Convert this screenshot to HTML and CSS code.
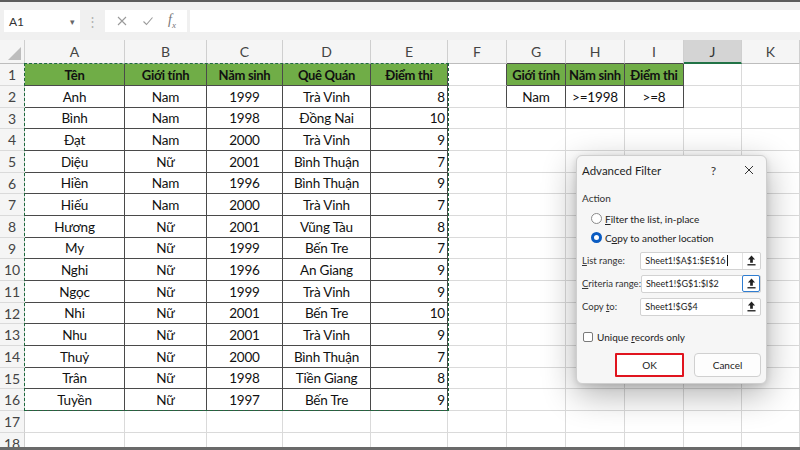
FILE: index.html
```html
<!DOCTYPE html>
<html lang="vi">
<head>
<meta charset="utf-8">
<title>Advanced Filter</title>
<link rel="stylesheet" href="styles.css">
</head>
<body>
<div class="frame">
  <div class="toolbar">
    <div class="namebox"><span>A1</span><span class="caret">&#9662;</span></div>
    <div class="grip">&#8942;</div>
    <div class="fbtns">
      <svg class="ico" viewBox="0 0 12 12" width="12" height="12"><path d="M2 2 L10 10 M10 2 L2 10" stroke="#9a9a9a" stroke-width="1.1" fill="none"/></svg>
      <svg class="ico" viewBox="0 0 12 12" width="12" height="12"><path d="M1.5 6.5 L4.5 9.5 L10.5 2.5" stroke="#9a9a9a" stroke-width="1.1" fill="none"/></svg>
      <span class="fx">f<sub>x</sub></span>
    </div>
    <div class="finput"></div>
  </div>

  <div class="sheet">
    <div class="grid">
      <div class="c corner"><span class="tri"></span></div>
      <div class="c ch">A</div><div class="c ch">B</div><div class="c ch">C</div><div class="c ch">D</div><div class="c ch">E</div><div class="c ch">F</div><div class="c ch ku">G</div><div class="c ch ku">H</div><div class="c ch ku">I</div><div class="c ch sel">J</div><div class="c ch">K</div>

      <div class="c rh">1</div><div class="c k g">Tên</div><div class="c k g">Giới tính</div><div class="c k g">Năm sinh</div><div class="c k g">Quê Quán</div><div class="c k g">Điểm thi</div><div class="c kl"></div><div class="c k g">Giới tính</div><div class="c k g">Năm sinh</div><div class="c k g">Điểm thi</div><div class="c"></div><div class="c"></div>

      <div class="c rh">2</div><div class="c k">Anh</div><div class="c k">Nam</div><div class="c k">1999</div><div class="c k">Trà Vinh</div><div class="c k n">8</div><div class="c kl"></div><div class="c k">Nam</div><div class="c k">&gt;=1998</div><div class="c k">&gt;=8</div><div class="c"></div><div class="c"></div>

      <div class="c rh">3</div><div class="c k">Bình</div><div class="c k">Nam</div><div class="c k">1998</div><div class="c k">Đồng Nai</div><div class="c k n">10</div><div class="c"></div><div class="c"></div><div class="c"></div><div class="c"></div><div class="c"></div><div class="c"></div>

      <div class="c rh">4</div><div class="c k">Đạt</div><div class="c k">Nam</div><div class="c k">2000</div><div class="c k">Trà Vinh</div><div class="c k n">9</div><div class="c"></div><div class="c"></div><div class="c"></div><div class="c"></div><div class="c"></div><div class="c"></div>

      <div class="c rh">5</div><div class="c k">Diệu</div><div class="c k">Nữ</div><div class="c k">2001</div><div class="c k">Bình Thuận</div><div class="c k n">7</div><div class="c"></div><div class="c"></div><div class="c"></div><div class="c"></div><div class="c"></div><div class="c"></div>

      <div class="c rh">6</div><div class="c k">Hiền</div><div class="c k">Nam</div><div class="c k">1996</div><div class="c k">Bình Thuận</div><div class="c k n">9</div><div class="c"></div><div class="c"></div><div class="c"></div><div class="c"></div><div class="c"></div><div class="c"></div>

      <div class="c rh">7</div><div class="c k">Hiếu</div><div class="c k">Nam</div><div class="c k">2000</div><div class="c k">Trà Vinh</div><div class="c k n">7</div><div class="c"></div><div class="c"></div><div class="c"></div><div class="c"></div><div class="c"></div><div class="c"></div>

      <div class="c rh">8</div><div class="c k">Hương</div><div class="c k">Nữ</div><div class="c k">2001</div><div class="c k">Vũng Tàu</div><div class="c k n">8</div><div class="c"></div><div class="c"></div><div class="c"></div><div class="c"></div><div class="c"></div><div class="c"></div>

      <div class="c rh">9</div><div class="c k">My</div><div class="c k">Nữ</div><div class="c k">1999</div><div class="c k">Bến Tre</div><div class="c k n">7</div><div class="c"></div><div class="c"></div><div class="c"></div><div class="c"></div><div class="c"></div><div class="c"></div>

      <div class="c rh">10</div><div class="c k">Nghi</div><div class="c k">Nữ</div><div class="c k">1996</div><div class="c k">An Giang</div><div class="c k n">9</div><div class="c"></div><div class="c"></div><div class="c"></div><div class="c"></div><div class="c"></div><div class="c"></div>

      <div class="c rh">11</div><div class="c k">Ngọc</div><div class="c k">Nữ</div><div class="c k">1999</div><div class="c k">Trà Vinh</div><div class="c k n">9</div><div class="c"></div><div class="c"></div><div class="c"></div><div class="c"></div><div class="c"></div><div class="c"></div>

      <div class="c rh">12</div><div class="c k">Nhi</div><div class="c k">Nữ</div><div class="c k">2001</div><div class="c k">Bến Tre</div><div class="c k n">10</div><div class="c"></div><div class="c"></div><div class="c"></div><div class="c"></div><div class="c"></div><div class="c"></div>

      <div class="c rh">13</div><div class="c k">Nhu</div><div class="c k">Nữ</div><div class="c k">2001</div><div class="c k">Trà Vinh</div><div class="c k n">9</div><div class="c"></div><div class="c"></div><div class="c"></div><div class="c"></div><div class="c"></div><div class="c"></div>

      <div class="c rh">14</div><div class="c k">Thuỷ</div><div class="c k">Nữ</div><div class="c k">2000</div><div class="c k">Bình Thuận</div><div class="c k n">7</div><div class="c"></div><div class="c"></div><div class="c"></div><div class="c"></div><div class="c"></div><div class="c"></div>

      <div class="c rh">15</div><div class="c k">Trân</div><div class="c k">Nữ</div><div class="c k">1998</div><div class="c k">Tiền Giang</div><div class="c k n">8</div><div class="c"></div><div class="c"></div><div class="c"></div><div class="c"></div><div class="c"></div><div class="c"></div>

      <div class="c rh">16</div><div class="c k">Tuyền</div><div class="c k">Nữ</div><div class="c k">1997</div><div class="c k">Bến Tre</div><div class="c k n">9</div><div class="c"></div><div class="c"></div><div class="c"></div><div class="c"></div><div class="c"></div><div class="c"></div>

      <div class="c rh">17</div><div class="c"></div><div class="c"></div><div class="c"></div><div class="c"></div><div class="c"></div><div class="c"></div><div class="c"></div><div class="c"></div><div class="c"></div><div class="c"></div><div class="c"></div>

      <div class="c rh">18</div><div class="c"></div><div class="c"></div><div class="c"></div><div class="c"></div><div class="c"></div><div class="c"></div><div class="c"></div><div class="c"></div><div class="c"></div><div class="c"></div><div class="c"></div>
    </div>
    <div class="marquee"></div>
  </div>

  <div class="dlg">
    <div class="dlg-title">
      <span class="t">Advanced Filter</span>
      <span class="q">?</span>
      <svg class="close" viewBox="0 0 10 10" width="10" height="10"><path d="M1 1 L9 9 M9 1 L1 9" stroke="#333" stroke-width="1" fill="none"/></svg>
    </div>
    <div class="sect">Action</div>
    <div class="radio"><span class="rb"></span><span><u>F</u>ilter the list, in-place</span></div>
    <div class="radio"><span class="rb on"></span><span>C<u>o</u>py to another location</span></div>
    <div class="fields">
      <div class="field"><span class="lbl"><u>L</u>ist range:</span>
        <div class="inp"><span class="val">Sheet1!$A$1:$E$16<span class="cursor"></span></span>
          <span class="pick"><svg viewBox="0 0 10 12" width="9" height="11"><path d="M5 0.5 L1 5 H3.5 V8.5 H6.5 V5 H9 Z" fill="#222"/><rect x="0.5" y="10" width="9" height="1.5" fill="#222"/></svg></span></div>
      </div>
      <div class="field"><span class="lbl"><u>C</u>riteria range:</span>
        <div class="inp"><span class="val">Sheet1!$G$1:$I$2</span>
          <span class="pick focus"><svg viewBox="0 0 10 12" width="9" height="11"><path d="M5 0.5 L1 5 H3.5 V8.5 H6.5 V5 H9 Z" fill="#222"/><rect x="0.5" y="10" width="9" height="1.5" fill="#222"/></svg></span></div>
      </div>
      <div class="field"><span class="lbl">Copy <u>t</u>o:</span>
        <div class="inp"><span class="val">Sheet1!$G$4</span>
          <span class="pick"><svg viewBox="0 0 10 12" width="9" height="11"><path d="M5 0.5 L1 5 H3.5 V8.5 H6.5 V5 H9 Z" fill="#222"/><rect x="0.5" y="10" width="9" height="1.5" fill="#222"/></svg></span></div>
      </div>
    </div>
    <div class="chk"><span class="cb"></span><span>Unique <u>r</u>ecords only</span></div>
    <div class="btns"><div class="btn ok">OK</div><div class="btn cancel">Cancel</div></div>
  </div>
</div>
</body>
</html>
```
FILE: styles.css
```css
* { box-sizing: border-box; }
body { margin: 0; background: #fff; font-family: Lato, "Noto Sans", sans-serif; }

.frame {
  position: relative;
  width: 800px;
  height: 450px;
  overflow: hidden;
  background: #fff;
  border-top: 2px solid #5c5c5c;
  border-bottom: 3px solid #6a6a6a;
}

/* formula bar */
.toolbar {
  height: 38px;
  background: #f0f0f0;
  display: flex;
  align-items: center;
  padding-left: 4px;
}
.namebox {
  width: 76px;
  height: 22px;
  background: #fff;
  display: flex;
  align-items: center;
  justify-content: space-between;
  padding: 0 5px 0 5px;
  font-size: 12px;
  color: #333;
}
.namebox .caret { font-size: 9px; color: #666; }
.grip { width: 25px; text-align: center; color: #b0b0b0; font-size: 13px; }
.fbtns {
  width: 82px;
  height: 22px;
  background: #fff;
  display: flex;
  align-items: center;
  justify-content: space-around;
  padding: 0 4px;
}
.fx { font-family: "Liberation Serif", serif; font-style: italic; font-size: 14px; color: #777; }
.fx sub { font-size: 9px; }
.finput { flex: 1; height: 22px; background: #fff; margin-left: 3px; }

/* grid */
.sheet { position: relative; }
.grid {
  display: grid;
  grid-template-columns: 25px 100px 82px 76px 88px 77px 59px 59px 59px 59px 58px 58px;
  grid-template-rows: 24px repeat(6, 22px 22px 21px);
}
.c {
  border-right: 1px solid #dadada;
  border-bottom: 1px solid #dadada;
  display: flex;
  align-items: center;
  justify-content: center;
  font-size: 13.5px;
  letter-spacing: -0.2px;
  color: #111;
  white-space: nowrap;
  overflow: hidden;
}
.ch {
  background: #f5f5f5;
  color: #444;
  border-right-color: #cfcfcf;
  border-bottom-color: #bdbdbd;
  font-size: 14px;
  letter-spacing: 0;
}
.corner { background: #f5f5f5; border-right-color: #cfcfcf; border-bottom-color: #bdbdbd; position: relative; }
.tri {
  position: absolute;
  right: 3px;
  bottom: 3px;
  width: 0; height: 0;
  border-left: 13px solid transparent;
  border-bottom: 13px solid #bdbdbd;
}
.sel { background: #d4d4d4; border-bottom: 2px solid #217346; color: #333; }
.rh {
  background: #f5f5f5;
  color: #444;
  border-right-color: #cfcfcf;
  border-bottom-color: #dadada;
  font-size: 14px;
  letter-spacing: 0;
}
.k { border-right-color: #4a4a4a; border-bottom-color: #4a4a4a; }
.kl { border-right-color: #4a4a4a; }
.ku { border-bottom-color: #4a4a4a; }
.g { background: #70ad47; font-weight: 700; color: #111; font-size: 13px; letter-spacing: -0.3px; }
.n { justify-content: flex-end; padding-right: 2px; }

.marquee {
  position: absolute;
  left: 24px;
  top: 23px;
  width: 425px;
  height: 348px;
  border: 1px dashed #1d6b3e;
  pointer-events: none;
}

/* dialog */
.dlg {
  position: absolute;
  left: 576px;
  top: 153px;
  width: 191px;
  height: 229px;
  background: #f6f6f6;
  border: 1px solid #cfcfcf;
  border-radius: 6px;
  box-shadow: 0 10px 34px rgba(0,0,0,0.32), 0 2px 6px rgba(0,0,0,0.12);
  font-family: Lato, "Noto Sans", sans-serif;
  font-size: 10px;
  color: #222;
  display: flex;
  flex-direction: column;
  padding: 0 5px 0 5px;
}
.dlg u { text-decoration: underline; text-underline-offset: 1px; }
.dlg-title {
  height: 28px;
  display: flex;
  align-items: center;
  font-size: 11.5px;
  color: #1f1f1f;
}
.dlg-title .t { flex: 1; }
.dlg-title .q { margin-right: 28px; font-size: 12px; color: #333; }
.dlg-title .close { margin-right: 7px; }
.sect { margin-top: 7px; height: 14px; line-height: 14px; color: #333; }
.radio {
  height: 19px;
  display: flex;
  align-items: center;
  padding-left: 9px;
  gap: 3px;
  white-space: nowrap;
}
.sect + .radio { margin-top: 4px; }
.rb {
  width: 11px; height: 11px;
  border-radius: 50%;
  border: 1px solid #8a8a8a;
  background: #fff;
}
.rb.on { border: 3px solid #0b5cc2; }
.fields { margin-top: 2px; display: flex; flex-direction: column; }
.field { height: 23px; display: flex; align-items: center; }
.lbl { width: 59px; color: #333; white-space: nowrap; font-size: 9.5px; }
.inp {
  width: 122px;
  height: 18px;
  background: #fff;
  border: 1px solid #d2d2d2;
  border-radius: 2px;
  display: flex;
  align-items: center;
}
.val { flex: 1; padding-left: 4px; font-size: 9px; color: #222; display: flex; align-items: center; white-space: nowrap; }
.cursor { display: inline-block; width: 1px; height: 11px; background: #111; margin-left: 1px; }
.pick {
  width: 18px; height: 16px;
  border-left: 1px solid #e2e2e2;
  display: flex; align-items: center; justify-content: center;
}
.pick.focus { border: 1px solid #2f7dd1; border-radius: 2px; height: 17px; }
.chk {
  margin-top: 10px;
  height: 18px;
  display: flex;
  align-items: center;
  gap: 4px;
  padding-left: 1px;
  white-space: nowrap;
}
.cb {
  width: 10px; height: 10px;
  border: 1px solid #7a7a7a;
  border-radius: 2px;
  background: #fff;
}
.btns {
  margin-top: 7px;
  height: 24px;
  display: flex;
  gap: 10px;
  padding-left: 33px;
}
.btn {
  height: 24px;
  display: flex;
  align-items: center;
  justify-content: center;
  background: #fdfdfd;
  border: 1px solid #d0d0d0;
  border-radius: 4px;
  font-size: 10px;
  color: #222;
}
.btn.ok { width: 69px; border: 2px solid #e0141e; border-radius: 1px; background: #fff; }
.btn.cancel { width: 67px; }
```
